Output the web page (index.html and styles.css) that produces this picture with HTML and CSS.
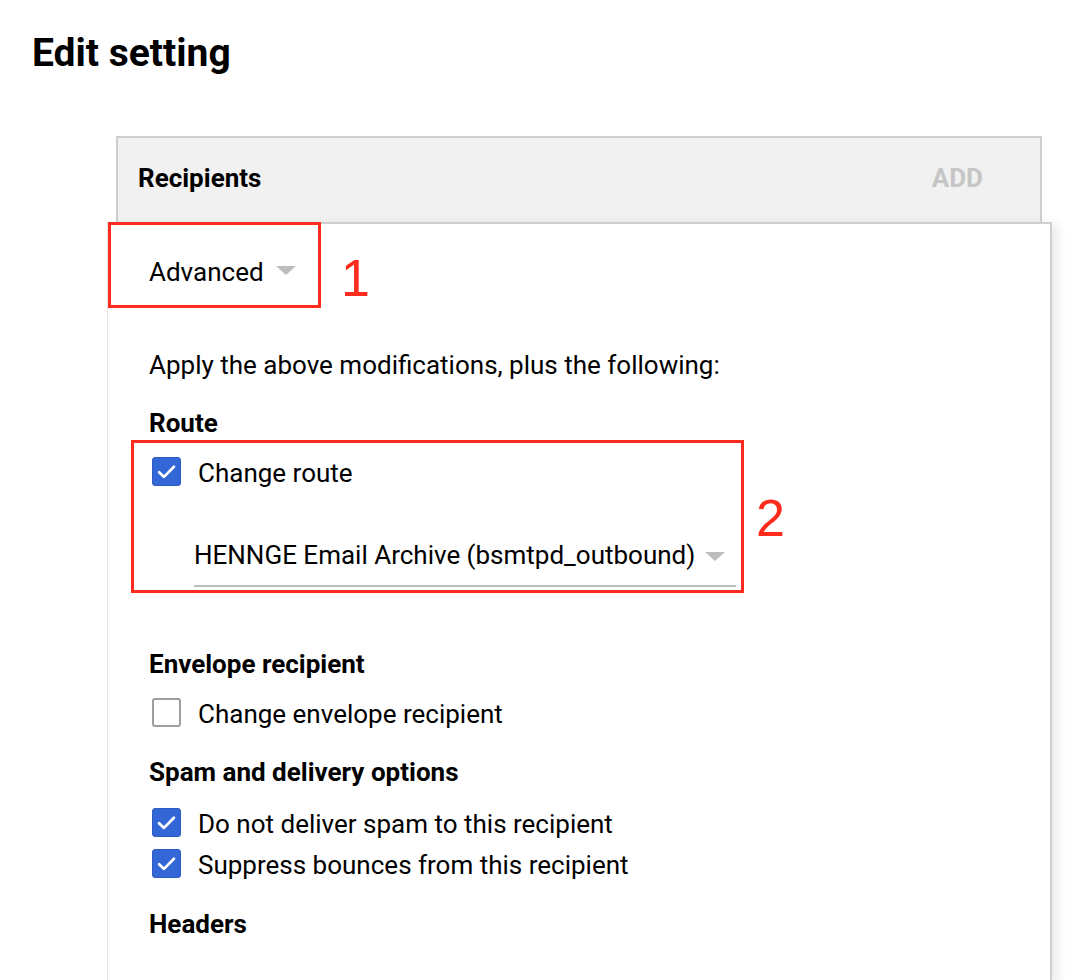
FILE: index.html
```html
<!DOCTYPE html>
<html>
<head>
<meta charset="utf-8">
<link rel="stylesheet" href="styles.css">
</head>
<body>
<h1 class="title">Edit setting</h1>
<div class="card">
  <div class="card-head">
    <span class="head-label">Recipients</span>
    <span class="head-add">ADD</span>
  </div>
  <div class="panel">
    <div class="adv-row">
      <div class="mark mark-1">
        <span class="adv-label">Advanced</span>
        <span class="tri"></span>
      </div>
      <span class="num num-1">1</span>
    </div>
    <div class="body">
      <div class="line">Apply the above modifications, plus the following:</div>
      <div class="line bold route">Route</div>
      <div class="route-row">
        <div class="mark mark-2">
          <label class="check-row">
            <span class="cb on"><svg viewBox="0 0 24 24"><path d="M5.4 12.6 L9.8 16.8 L18.6 7.8" fill="none" stroke="#fff" stroke-width="2.4" stroke-linecap="round" stroke-linejoin="round"/></svg></span>
            <span class="cb-text">Change route</span>
          </label>
          <div class="select">
            <span class="select-text">HENNGE Email Archive (bsmtpd_outbound)</span>
            <span class="tri"></span>
          </div>
        </div>
        <span class="num num-2">2</span>
      </div>
      <div class="line bold sec-env">Envelope recipient</div>
      <label class="check-row row-env">
        <span class="cb off"></span>
        <span class="cb-text">Change envelope recipient</span>
      </label>
      <div class="line bold sec-spam">Spam and delivery options</div>
      <label class="check-row row-spam1">
        <span class="cb on"><svg viewBox="0 0 24 24"><path d="M5.4 12.6 L9.8 16.8 L18.6 7.8" fill="none" stroke="#fff" stroke-width="2.4" stroke-linecap="round" stroke-linejoin="round"/></svg></span>
        <span class="cb-text">Do not deliver spam to this recipient</span>
      </label>
      <label class="check-row row-spam2">
        <span class="cb on"><svg viewBox="0 0 24 24"><path d="M5.4 12.6 L9.8 16.8 L18.6 7.8" fill="none" stroke="#fff" stroke-width="2.4" stroke-linecap="round" stroke-linejoin="round"/></svg></span>
        <span class="cb-text">Suppress bounces from this recipient</span>
      </label>
      <div class="line bold sec-head">Headers</div>
    </div>
  </div>
</div>
</body>
</html>
```
FILE: styles.css
```css
html, body {
  margin: 0;
  padding: 0;
  background: #fff;
  height: 980px;
  overflow: hidden;
}
body {
  font-family: Roboto, "Liberation Sans", sans-serif;
  color: #000;
  font-size: 26px;
}
.title {
  margin: 29px 0 0 32px;
  font-size: 39px;
  line-height: 48px;
  font-weight: 700;
}
.card {
  margin: 59px 50px 0 116px;
}
.card-head {
  height: 86px;
  box-sizing: border-box;
  background: #f1f1f1;
  border: 2px solid #cfcfcf;
  border-bottom: none;
  display: flex;
  align-items: center;
  justify-content: space-between;
  padding: 0 57px 0 20px;
}
.head-label {
  font-weight: 700;
  font-size: 26px;
  margin-top: -4px;
}
.head-add {
  font-weight: 700;
  font-size: 26px;
  color: #c6c6c6;
  margin-top: -4px;
}
.panel {
  margin: 0 -10px 0 -9px;
  background: #fff;
  border-top: 2px solid #cfcfcf;
  border-right: 2px solid #cfcfcf;
  border-left: 1px solid #e6e6e6;
  height: 760px;
  box-shadow: 6px 2px 10px rgba(0,0,0,0.08);
}
.mark {
  border: 3px solid #ff2b1c;
  box-sizing: border-box;
}
.adv-row {
  display: flex;
  align-items: center;
  margin-top: -2px;
}
.mark-1 {
  width: 213px;
  height: 86px;
  display: flex;
  align-items: center;
  padding: 0 0 0 38px;
}
.adv-label {
  line-height: 32px;
  margin-top: 14px;
}
.tri {
  width: 0;
  height: 0;
  border-left: 10px solid transparent;
  border-right: 10px solid transparent;
  border-top: 9px solid #bdbdbd;
}
.mark-1 .tri {
  margin-left: 12px;
  margin-top: 10px;
}
.num {
  font-family: "Liberation Sans", Arial, sans-serif;
  font-size: 52px;
  color: #ff2b1c;
  line-height: 52px;
}
.num-1 {
  margin-left: 20px;
  margin-top: 26px;
}
.body {
  padding-left: 41px;
}
.line {
  line-height: 32px;
}
.bold {
  font-weight: 700;
}
.body > .line:first-child {
  margin-top: 41px;
}
.route {
  margin-top: 26px;
}
.route-row {
  display: flex;
  align-items: center;
  margin-top: 1px;
  margin-left: -18px;
}
.mark-2 {
  width: 613px;
  height: 153px;
  padding: 13px 5px 0 18px;
}
.check-row {
  display: flex;
  align-items: center;
  height: 30px;
}
.cb {
  width: 29px;
  height: 29px;
  box-sizing: border-box;
  border-radius: 3px;
  flex: none;
  display: flex;
  align-items: center;
  justify-content: center;
}
.cb svg {
  width: 27px;
  height: 27px;
}
.cb.on {
  background: #3367d6;
  border: 1px solid #2d5cc2;
}
.cb.off {
  border: 2px solid #9e9e9e;
  background: #fff;
}
.cb-text {
  margin-left: 17px;
  line-height: 32px;
  margin-top: 3px;
}
.select {
  margin: 53px 0 0 42px;
  display: flex;
  align-items: center;
  justify-content: space-between;
  line-height: 32px;
  padding-bottom: 14px;
  border-bottom: 2px solid #bdbdbd;
}
.select .tri {
  margin-right: 11px;
  margin-top: 2px;
}
.num-2 {
  margin-left: 12px;
  margin-top: 2px;
}
.sec-env {
  margin-top: 55px;
}
.row-env {
  margin-top: 17px;
}
.sec-spam {
  margin-top: 29px;
}
.row-spam1 {
  margin-top: 19px;
}
.row-spam2 {
  margin-top: 11px;
}
.sec-head {
  margin-top: 30px;
}
.body .check-row {
  margin-left: 3px;
}
.mark-2 .check-row {
  margin-left: 0;
}
```
